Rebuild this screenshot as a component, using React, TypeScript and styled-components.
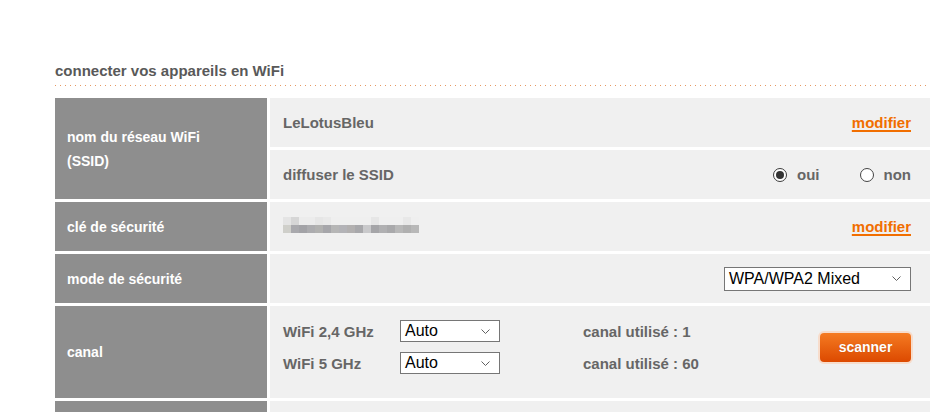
import React from "react";
import styled, { createGlobalStyle } from "styled-components";

const GlobalStyle = createGlobalStyle`
  html, body {
    margin: 0;
    padding: 0;
    background: #ffffff;
    overflow: hidden;
  }
  body {
    font-family: "Liberation Sans", Arial, sans-serif;
  }
`;

const Page = styled.div`
  padding: 62px 0 0 55px;
  width: 875px;
`;

const Title = styled.h2`
  margin: 0;
  font-size: 15px;
  line-height: 18px;
  font-weight: bold;
  color: #595959;
  padding-bottom: 5px;
`;

const Dotted = styled.div`
  height: 1px;
  background-image: linear-gradient(to right, #e8975f 1px, transparent 1px);
  background-size: 5px 1px;
  margin-bottom: 12px;
`;

const Table = styled.div`
  display: flex;
  flex-direction: column;
  gap: 3px;
`;

const Row = styled.div`
  display: grid;
  grid-template-columns: 212px 660px;
  column-gap: 3px;
`;

const Label = styled.div`
  background: #8e8e8e;
  color: #ffffff;
  font-size: 14px;
  font-weight: bold;
  line-height: 24px;
  padding: 0 12px;
  display: flex;
  align-items: center;
  min-height: 49px;
`;

const Stack = styled.div`
  display: flex;
  flex-direction: column;
  gap: 3px;
`;

const Cell = styled.div<{ $tall?: boolean; $end?: boolean }>`
  background: #f0f0f0;
  color: #666666;
  font-size: 15px;
  font-weight: bold;
  height: ${(p) => (p.$tall ? "92px" : "49px")};
  box-sizing: border-box;
  padding: 0 19px 0 13px;
  display: flex;
  align-items: center;
  justify-content: ${(p) => (p.$end ? "flex-end" : "space-between")};
`;

const Link = styled.a`
  color: #f16e00;
  text-decoration: underline;
  text-decoration-thickness: 2px;
  text-underline-offset: 2px;
  cursor: pointer;
`;

const Radios = styled.div`
  display: flex;
  align-items: center;
  gap: 40px;
  margin-left: auto;
`;

const RadioItem = styled.label`
  display: flex;
  align-items: center;
  gap: 10px;
`;

const RadioDot = styled.span<{ $on?: boolean }>`
  width: 14px;
  height: 14px;
  box-sizing: border-box;
  border-radius: 50%;
  border: ${(p) => (p.$on ? "1.5px solid #3a3a3a" : "1px solid #444")};
  background: #ffffff;
  display: flex;
  align-items: center;
  justify-content: center;
  &::after {
    content: "";
    width: 8px;
    height: 8px;
    border-radius: 50%;
    background: #333333;
    display: ${(p) => (p.$on ? "block" : "none")};
  }
`;

const Pixels = styled.div`
  display: grid;
  grid-template-columns: repeat(17, 8px);
  grid-template-rows: 8px 8px;
  margin-top: -3px;
`;

const Pixel = styled.span<{ $c: string }>`
  background: ${(p) => p.$c};
`;

const SelectBox = styled.div<{ $w: number; $h: number }>`
  width: ${(p) => p.$w}px;
  height: ${(p) => p.$h}px;
  box-sizing: border-box;
  border: 1px solid #767676;
  background: #ffffff;
  color: #000000;
  font-size: 16px;
  font-weight: normal;
  padding: 0 9px 0 4px;
  display: flex;
  align-items: center;
  justify-content: space-between;
`;

const Chevron = () => (
  <svg width="9" height="5" viewBox="0 0 9 5">
    <polyline points="0.5,0.5 4.5,4.5 8.5,0.5" fill="none" stroke="#606060" strokeWidth="1" />
  </svg>
);

const Select = ({ value, width, height = 24 }: { value: string; width: number; height?: number }) => (
  <SelectBox $w={width} $h={height}>
    <span>{value}</span>
    <Chevron />
  </SelectBox>
);

const CanalBody = styled.div`
  display: flex;
  align-items: center;
  width: 100%;
  padding: 14px 0 24px;
  box-sizing: border-box;
  height: 100%;
`;

const CanalGrid = styled.div`
  display: grid;
  grid-template-columns: 117px 183px auto;
  row-gap: 10px;
  align-items: center;
`;

const ScanButton = styled.button`
  margin-left: auto;
  width: 91px;
  height: 29px;
  border: none;
  border-radius: 4px;
  background: linear-gradient(#f57b22, #dc4900);
  box-shadow: 0 0 0 2px #f7dccb;
  color: #ffffff;
  font-family: "Liberation Sans", Arial, sans-serif;
  font-size: 14px;
  font-weight: bold;
  text-shadow: 0 0 1px rgba(120, 40, 0, 0.4);
  cursor: pointer;
`;

const topRow = ["#e4e4e4", "#d6d6d6", "#ececec", "#ececec", "#e6e6e6", "#e9e9e9", "#efefef", "#efefef", "#efefef", "#efefef", "#efefef", "#e6e6e6", "#efefef", "#efefef", "#efefef", "#e8e8e8", "#efefef"];
const bottomRow = ["#cfcfca", "#a9a9ad", "#a3a3a7", "#acacaf", "#b1b1b0", "#a6a6aa", "#b6b6b6", "#b3b3b7", "#b2b0b0", "#a8a8ab", "#c9c9cb", "#a5a5a8", "#b0b0b2", "#a9a9ab", "#b8b8b8", "#b0b0b0", "#b8b8b8"];

const App = () => {
  return (
    <>
      <GlobalStyle />
      <Page>
        <Title>connecter vos appareils en WiFi</Title>
        <Dotted />
        <Table>
          <Row>
            <Label>nom du réseau WiFi<br />(SSID)</Label>
            <Stack>
              <Cell>
                <span>LeLotusBleu</span>
                <Link>modifier</Link>
              </Cell>
              <Cell>
                <span>diffuser le SSID</span>
                <Radios>
                  <RadioItem>
                    <RadioDot $on />
                    oui
                  </RadioItem>
                  <RadioItem>
                    <RadioDot />
                    non
                  </RadioItem>
                </Radios>
              </Cell>
            </Stack>
          </Row>
          <Row>
            <Label>clé de sécurité</Label>
            <Cell>
              <Pixels>
                {topRow.concat(bottomRow).map((c, i) => (
                  <Pixel key={i} $c={c} />
                ))}
              </Pixels>
              <Link>modifier</Link>
            </Cell>
          </Row>
          <Row>
            <Label>mode de sécurité</Label>
            <Cell $end>
              <Select value="WPA/WPA2 Mixed" width={187} />
            </Cell>
          </Row>
          <Row>
            <Label>canal</Label>
            <Cell $tall>
              <CanalBody>
                <CanalGrid>
                  <span>WiFi 2,4 GHz</span>
                  <Select value="Auto" width={100} height={22} />
                  <span>canal utilisé : 1</span>
                  <span>WiFi 5 GHz</span>
                  <Select value="Auto" width={100} height={22} />
                  <span>canal utilisé : 60</span>
                </CanalGrid>
                <ScanButton>scanner</ScanButton>
              </CanalBody>
            </Cell>
          </Row>
          <Row>
            <Label />
            <Cell />
          </Row>
        </Table>
      </Page>
    </>
  );
};

export default App;
